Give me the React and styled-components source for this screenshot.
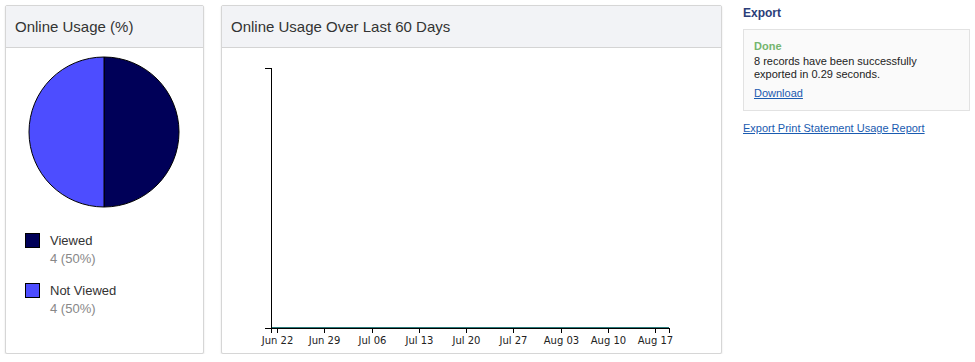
import styled, { createGlobalStyle } from 'styled-components';

const GlobalStyle = createGlobalStyle`
  body {
    margin: 0;
    background: #fff;
    font-family: "Liberation Sans", Arial, sans-serif;
    color: #333;
  }
`;

const Page = styled.div`
  display: flex;
  align-items: flex-start;
  padding: 5px 0 0 5px;
`;

const Panel = styled.div`
  width: ${p => p.width}px;
  height: 349px;
  box-sizing: border-box;
  margin-right: ${p => p.gap}px;
  border: 1px solid #d6d6d6;
  border-radius: 2px;
  box-shadow: 0 1px 2px rgba(0, 0, 0, 0.12);
  background: #fff;
  display: flex;
  flex-direction: column;
  overflow: hidden;
`;

const PanelHeader = styled.div`
  flex-shrink: 0;
  height: 42px;
  box-sizing: border-box;
  padding: 0 9px 1px;
  display: flex;
  align-items: center;
  background: #f2f3f6;
  border-bottom: 1px solid #d4d4d4;
  font-size: 15px;
  color: #333;
`;

const PieBody = styled.div`
  display: flex;
  padding: 8px 0 0 22px;
`;

const Legend = styled.div`
  display: flex;
  flex-direction: column;
  gap: 14px;
  padding: 24px 0 0 19px;
`;

const LegendItem = styled.div`
  display: flex;
  gap: 10px;
`;

const Swatch = styled.span`
  width: 13px;
  height: 13px;
  margin-top: 1px;
  border: 1px solid #000;
  background: ${p => p.color};
`;

const LegendText = styled.div`
  font-size: 13px;
  line-height: 18px;
  color: #333;
`;

const LegendValue = styled.div`
  color: #888;
`;

const ChartBody = styled.div`
  flex: 1;
  display: flex;
`;

const Side = styled.div`
  width: 227px;
  padding-top: 1px;
  font-size: 11px;
  color: #222;
`;

const SideTitle = styled.div`
  font-size: 12px;
  font-weight: bold;
  color: #2b3d78;
  line-height: 14px;
`;

const StatusBox = styled.div`
  margin-top: 9px;
  padding: 10px 10px 10px;
  background: #fafafa;
  border: 1px solid #e2e2e2;
  line-height: 13px;
`;

const Done = styled.div`
  font-weight: bold;
  color: #74b56e;
  margin-bottom: 2px;
`;

const Link = styled.a`
  color: #1a5bb0;
  text-decoration: underline;
  display: inline-block;
  margin-top: ${p => p.top || 0}px;
`;

function Pie() {
  return (
    <svg width="152" height="152" viewBox="0 0 152 152">
      <path d="M76 1 A75 75 0 0 1 76 151 Z" fill="#000058" stroke="#000" strokeWidth="1" />
      <path d="M76 151 A75 75 0 0 1 76 1 Z" fill="#4d4dff" stroke="#000" strokeWidth="1" />
    </svg>
  );
}

const ticks = [
  { x: 55.5, label: 'Jun 22' },
  { x: 102.5, label: 'Jun 29' },
  { x: 150.5, label: 'Jul 06' },
  { x: 197.5, label: 'Jul 13' },
  { x: 244.5, label: 'Jul 20' },
  { x: 291.5, label: 'Jul 27' },
  { x: 339.5, label: 'Aug 03' },
  { x: 386.5, label: 'Aug 10' },
  { x: 433.5, label: 'Aug 17' },
];

function LineChart() {
  return (
    <svg width="499" height="305" viewBox="0 0 499 305">
      <g stroke="#000" strokeWidth="1">
        <line x1="43" y1="20.5" x2="49.5" y2="20.5" />
        <line x1="49.5" y1="20" x2="49.5" y2="285" />
        <line x1="43" y1="280.5" x2="448" y2="280.5" />
        <line x1="447.5" y1="280" x2="447.5" y2="285" />
        {ticks.map(t => (
          <line key={t.label} x1={t.x} y1="280" x2={t.x} y2="285" />
        ))}
      </g>
      <line x1="50" y1="279.5" x2="447" y2="279.5" stroke="#2a7a7a" strokeWidth="1" />
      {ticks.map(t => (
        <text
          key={t.label}
          x={t.x}
          y="296"
          fontSize="10"
          fontFamily="DejaVu Sans, sans-serif"
          fill="#222"
          textAnchor="middle"
        >
          {t.label}
        </text>
      ))}
    </svg>
  );
}

export default function App() {
  return (
    <>
      <GlobalStyle />
      <Page>
        <Panel width={199} gap={17}>
          <PanelHeader>Online Usage (%)</PanelHeader>
          <PieBody>
            <Pie />
          </PieBody>
          <Legend>
            <LegendItem>
              <Swatch color="#000058" />
              <LegendText>
                Viewed
                <LegendValue>4 (50%)</LegendValue>
              </LegendText>
            </LegendItem>
            <LegendItem>
              <Swatch color="#4d4dff" />
              <LegendText>
                Not Viewed
                <LegendValue>4 (50%)</LegendValue>
              </LegendText>
            </LegendItem>
          </Legend>
        </Panel>
        <Panel width={501} gap={21}>
          <PanelHeader>Online Usage Over Last 60 Days</PanelHeader>
          <ChartBody>
            <LineChart />
          </ChartBody>
        </Panel>
        <Side>
          <SideTitle>Export</SideTitle>
          <StatusBox>
            <Done>Done</Done>
            8 records have been successfully
            <br />
            exported in 0.29 seconds.
            <br />
            <Link href="#" top={6}>Download</Link>
          </StatusBox>
          <Link href="#" top={11}>Export Print Statement Usage Report</Link>
        </Side>
      </Page>
    </>
  );
}
